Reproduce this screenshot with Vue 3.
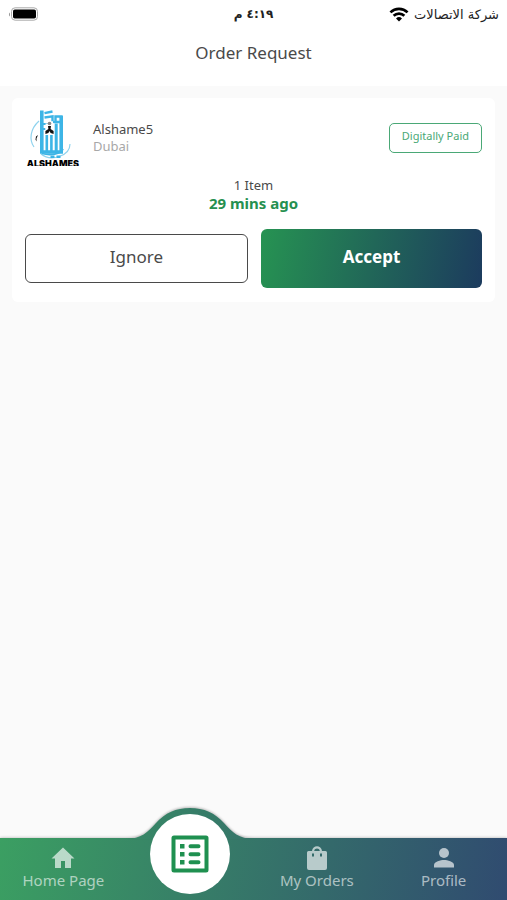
<template>
  <div class="page">
    <header class="header">
      <div class="status" dir="rtl" lang="ar">
        <div class="status__carrier">
          <span>شركة الاتصالات</span>
          <svg class="wifi" viewBox="0 0 18 14" aria-hidden="true">
            <path d="M1 5a11.5 11.5 0 0 1 16 0" />
            <path d="M4 8.200a7.200 7.200 0 0 1 10 0" />
            <path class="wifi__dot" d="M6.200 10.700a4 4 0 0 1 5.600 0L9 13.600z" />
          </svg>
        </div>
        <time class="status__time">٤:١٩ م</time>
        <div class="status__battery">
          <svg class="battery" viewBox="0 0 32 14" aria-hidden="true">
            <path d="M2 5.500v4C.6 9 .6 6 2 5.500z" fill="#999" />
            <rect x="3.500" y="0.800" width="26" height="12.400" rx="3.600" fill="#fff" stroke="#aaa" />
            <rect x="5" y="2.400" width="23" height="9.200" rx="1.800" fill="#000" />
          </svg>
        </div>
      </div>
      <h1 class="title">Order Request</h1>
    </header>

    <main class="content">
      <article v-for="order in orders" :key="order.id" class="card">
        <div class="card__top">
          <svg class="logo" viewBox="0 0 56 56" role="img" aria-label="Alshame5">
            <g fill="none" stroke="#8fd3ee" stroke-width="1.200">
              <path d="M14 11C5 19 4 30 9 37" />
              <path d="M45 34C45 46 26 52 16 44" />
            </g>
            <g fill="none" stroke="#3db5e6">
              <path d="M16.800 0.500v41.500h19.400V6" stroke-width="3.600" />
              <path d="M19.500 3.200l8-1.700M19.500 7.500l8-1.200v5" stroke-width="2.400" />
              <path d="M28 12h8.500V6.500h-6v6" stroke-width="2.400" />
              <path d="M31.200 13.500v28" stroke-width="3" />
              <path d="M26.400 25v16M21.800 25v16" stroke-width="2.600" />
              <path d="M18 14h5M18 19h2.500" stroke-width="2" />
              <path d="M17 43.500c8 2 19 1 21-4.500" stroke-width="1.800" />
            </g>
            <path d="M25.500 45.500h4v2.500h-4zM31.500 45.500h4v2.500h-4z" fill="#3db5e6" />
            <path d="M20.500 13.500h8.500v11h-8.500z" fill="#fff" />
            <g fill="#111">
              <circle cx="24.500" cy="13.500" r="1.800" fill="#888" />
              <path d="M23 16h3l-.4 3 3 2v3l-3-1-1.100-2-1.100 2-3 1v-3l3-2z" />
              <path d="M13 25l-2 1.500-.5 3 1 2v-3z" />
            </g>
            <text class="logo__text" x="28" y="57" text-anchor="middle">ALSHAMES</text>
          </svg>
          <div class="shop">
            <h2 class="shop__name">{{ order.shop }}</h2>
            <p class="shop__city">{{ order.city }}</p>
          </div>
          <span class="badge">{{ order.payment }}</span>
        </div>
        <div class="card__info">
          <p class="items">{{ order.items }}</p>
          <p class="ago">{{ order.ago }}</p>
        </div>
        <div class="card__actions">
          <button type="button" class="btn btn--ignore" @click="removeOrder(order.id)">Ignore</button>
          <button type="button" class="btn btn--accept" @click="removeOrder(order.id)">Accept</button>
        </div>
      </article>
    </main>

    <nav class="nav">
      <a href="#home" class="nav__item">
        <svg class="nav__icon" viewBox="0 0 24 24" aria-hidden="true">
          <path d="M10 22v-7h4v7h6v-9.500h3.500L12 1.500 .5 12.500H4V22z" />
        </svg>
        <span>Home Page</span>
      </a>
      <a href="#requests" class="nav__item nav__item--active" aria-label="Order Request">
        <svg class="bump" viewBox="0 0 128 31" aria-hidden="true">
          <defs>
            <linearGradient id="bump" x1="0" y1="0" x2="1" y2="0">
              <stop offset="0" stop-color="#378866" />
              <stop offset="1" stop-color="#357469" />
            </linearGradient>
          </defs>
          <path d="M0 31C15 31 22 24 30 15C39 5 50 0 64 0C78 0 89 5 98 15C106 24 113 31 128 31z" fill="url(#bump)" />
        </svg>
        <span class="circle">
          <svg class="circle__icon" viewBox="0 0 38 38" aria-hidden="true">
            <rect x="2.500" y="2.500" width="33" height="33" rx="0.500" fill="none" stroke="#1f9050" stroke-width="4" />
            <path
              d="M9 9h4.500v4.500H9zM9 17h4.500v4.500H9zM9 25h4.500v4.500H9z"
              fill="#1f9050"
            />
            <path d="M19.500 11.200h8M19.500 19.200h8M19.500 27.200h8" stroke="#1f9050" stroke-width="4" stroke-linecap="round" />
          </svg>
        </span>
      </a>
      <a href="#orders" class="nav__item">
        <svg class="nav__icon" viewBox="0 0 24 24" aria-hidden="true">
          <path
            fill-rule="evenodd"
            d="M7 5C7.500-1.500 16.500-1.500 17 5h3.500Q22 5 22 6.500V22q0 2-2 2H4q-2 0-2-2V6.500Q2 5 3.500 5zM9.200 5h5.600c-.5-3.200-5.100-3.200-5.600 0zM7 7.500v3h2v-3zM15 7.500v3h2v-3z"
          />
        </svg>
        <span>My Orders</span>
      </a>
      <a href="#profile" class="nav__item">
        <svg class="nav__icon" viewBox="0 0 24 24" aria-hidden="true">
          <circle cx="12" cy="7" r="5" />
          <path d="M2 21.500v-2.500c0-3.300 6.700-5 10-5s10 1.700 10 5v2.500z" />
        </svg>
        <span>Profile</span>
      </a>
    </nav>
  </div>
</template>

<script setup>
import { ref } from 'vue'

const orders = ref([
  {
    id: 1,
    shop: 'Alshame5',
    city: 'Dubai',
    payment: 'Digitally Paid',
    items: '1 Item',
    ago: '29 mins ago'
  }
])

function removeOrder(id) {
  orders.value = orders.value.filter(order => order.id !== id)
}
</script>

<style>
body {
  margin: 0;
  background: #fafafa;
}
</style>

<style scoped>
.page {
  min-height: 100vh;
  display: flex;
  flex-direction: column;
  font-family: "Noto Sans", "DejaVu Sans", sans-serif;
  color: #4a4a4a;
}

h1, h2, p {
  margin: 0;
  font-weight: 400;
}

.header {
  background: #fff;
  padding-bottom: 20px;
}

/* status bar */
.status {
  display: grid;
  grid-template-columns: 1fr auto 1fr;
  align-items: center;
  height: 28px;
  padding: 0 8px;
  font-family: "DejaVu Sans", sans-serif;
  font-size: 13px;
  color: #222;
}

.status__carrier {
  display: flex;
  align-items: center;
  gap: 5px;
}

.status__time {
  font-size: 12px;
  font-weight: 700;
}

.status__battery {
  display: flex;
  justify-content: flex-end;
}

.wifi {
  width: 20px;
  height: 15px;
  fill: none;
  stroke: #000;
  stroke-width: 2.5;
}

.wifi .wifi__dot {
  fill: #000;
  stroke: none;
}

.battery {
  width: 32px;
  height: 14px;
}

.title {
  margin-top: 12px;
  text-align: center;
  font-size: 17px;
  line-height: 26px;
}

/* order card */
.content {
  flex: 1;
  padding: 12px;
}

.card {
  padding: 12px 13px 14px;
  border-radius: 6px;
  background: #fff;
}

.card__top {
  display: flex;
  align-items: center;
}

.logo {
  width: 56px;
  height: 56px;
  overflow: hidden;
}

.logo__text {
  font-family: Inter, sans-serif;
  font-size: 9px;
  font-weight: 900;
  fill: #000;
}

.shop {
  flex: 1;
  margin-left: 12px;
}

.shop__name {
  font-size: 13px;
  line-height: 17px;
}

.shop__city {
  font-size: 13px;
  line-height: 17px;
  color: #a8a8a8;
}

.badge {
  padding: 4px 12px 8px;
  border: 1px solid #4aa876;
  border-radius: 5px;
  font-size: 11px;
  line-height: 16px;
  color: #4aa876;
}

.card__info {
  margin-top: 10px;
  text-align: center;
}

.items {
  font-size: 13px;
  line-height: 18px;
}

.ago {
  font-size: 15px;
  line-height: 18px;
  font-weight: 700;
  color: #259050;
}

.card__actions {
  display: flex;
  align-items: center;
  gap: 13px;
  margin-top: 17px;
}

.btn {
  flex: 1;
  box-sizing: border-box;
  padding: 0 0 5px;
  border: 0;
  border-radius: 6px;
  font-family: inherit;
  font-size: 17px;
  cursor: pointer;
}

.btn--ignore {
  height: 49px;
  border: 1px solid #4a4a4a;
  background: #fff;
  color: #4a4a4a;
}

.btn--accept {
  height: 59px;
  background: linear-gradient(100deg, #269352, #1c3b5e);
  font-weight: 700;
  color: #fff;
}

/* bottom navigation */
.nav {
  position: sticky;
  bottom: 0;
  display: grid;
  grid-template-columns: repeat(4, 1fr);
  height: 62px;
  background: linear-gradient(100deg, #3b9f62, #304b70);
  box-shadow: 0 0 3px rgba(0, 0, 0, 0.3);
}

.nav__item {
  position: relative;
  display: flex;
  flex-direction: column;
  align-items: center;
  padding-top: 8px;
  font-size: 15px;
  line-height: 20px;
  text-decoration: none;
  color: rgba(255, 255, 255, 0.6);
}

.nav__icon {
  width: 24px;
  height: 24px;
  fill: rgba(255, 255, 255, 0.65);
}

.bump {
  position: absolute;
  bottom: 61px;
  left: 50%;
  width: 128px;
  height: 31px;
  margin-left: -64px;
  filter: drop-shadow(0 -1px 1px rgba(0, 0, 0, 0.25));
}

.circle {
  position: absolute;
  bottom: 6px;
  left: 50%;
  display: flex;
  align-items: center;
  justify-content: center;
  width: 80px;
  height: 80px;
  margin-left: -40px;
  border-radius: 50%;
  background: #fff;
}

.circle__icon {
  width: 38px;
  height: 38px;
}
</style>
